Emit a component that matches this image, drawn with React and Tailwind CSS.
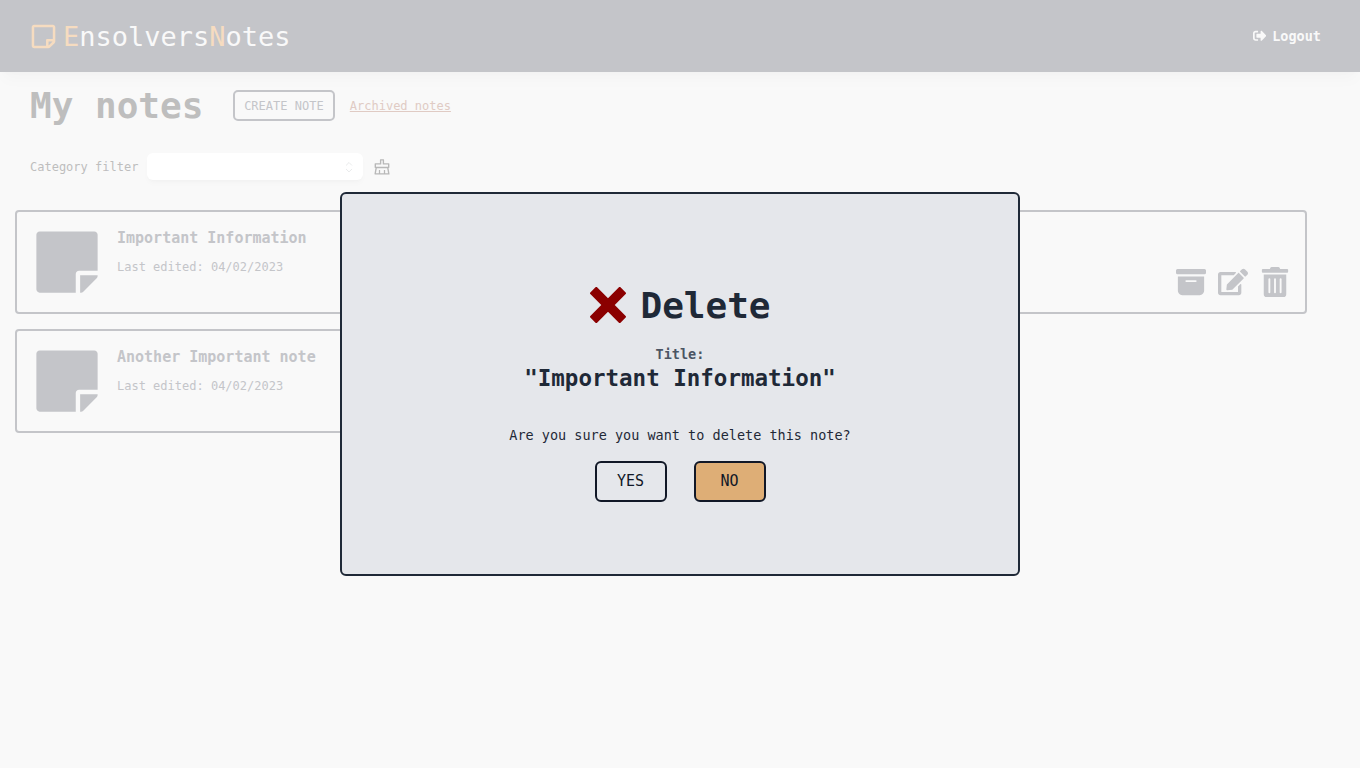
import { FaRegStickyNote, FaStickyNote, FaSignOutAlt, FaEdit, FaTrashAlt } from "react-icons/fa";
import { BsFillArchiveFill } from "react-icons/bs";
import { ImCross } from "react-icons/im";
import { AiOutlineClear } from "react-icons/ai";

const notes = [
  { id: 1, title: "Important Information", edited: "04/02/2023" },
  { id: 2 },
  { id: 3, title: "Another Important note", edited: "04/02/2023" },
];

function Header() {
  return (
    <header className="flex h-[72px] items-center justify-between bg-[#c4c5c9] pl-[30px] pr-[39px] shadow-[0_10px_15px_-3px_rgba(0,0,0,0.025),0_4px_6px_-4px_rgba(0,0,0,0.025)]">
      <div className="flex items-center gap-[6px] text-[27px] leading-[40px] text-[#f9f9f9]">
        <FaRegStickyNote className="text-[#f6dcc0]" />
        <span className="pt-[2px]">
          <span className="text-[#f6dcc0]">E</span>nsolvers<span className="text-[#f6dcc0]">N</span>otes
        </span>
      </div>
      <button className="flex items-center gap-[6px] text-[13.5px] font-bold leading-5 text-[#f9f9f9]">
        <FaSignOutAlt />
        Logout
      </button>
    </header>
  );
}

function NoteCard({ note }) {
  return (
    <article className="flex h-[104px] gap-[15px] rounded-[4px] border-2 border-[#c4c5c9] p-[15px] text-[#c4c5c9]">
      <FaStickyNote className="size-[70px] shrink-0" />
      <div className="grow">
        {note.title && (
          <>
            <h2 className="text-[15px] font-bold leading-[22px]">{note.title}</h2>
            <p className="mt-[9px] text-[12px] leading-[18px]">Last edited: {note.edited}</p>
          </>
        )}
      </div>
      <div className="flex items-end gap-3 text-[30px]">
        <BsFillArchiveFill />
        <FaEdit />
        <FaTrashAlt />
      </div>
    </article>
  );
}

function DeleteDialog() {
  return (
    <div className="fixed inset-0 flex items-center justify-center">
      <section
        role="dialog"
        className="flex h-1/2 w-1/2 flex-col items-center justify-center rounded-[6px] border-2 border-[#1f2937] bg-[#e5e7eb] pt-[18px] text-[#1f2937]"
      >
        <h2 className="flex h-[40px] items-center text-[36px] font-bold leading-[40px]">
          <ImCross className="ml-px mr-[14px] text-[#8b0000]" />
          <span className="pt-[2px]">Delete</span>
        </h2>
        <p className="mt-[19px] text-[13.5px] font-bold leading-5 text-[#4b5563]">Title:</p>
        <p className="text-[22.5px] font-bold leading-[28px]">"Important Information"</p>
        <p className="mt-[33px] text-[13.5px] leading-5">Are you sure you want to delete this note?</p>
        <div className="mt-4 flex gap-[27px] text-[15px] text-[#111827]">
          <button className="h-[41px] w-[72px] rounded-[6px] border-2 border-[#111827]">YES</button>
          <button className="h-[41px] w-[72px] rounded-[6px] border-2 border-[#111827] bg-[#deae76]">NO</button>
        </div>
      </section>
    </div>
  );
}

export default function App() {
  return (
    <div className="min-h-screen bg-[#f9f9f9] font-['DejaVu_Sans_Mono',monospace]">
      <Header />
      <main>
        <div className="flex h-[68px] items-center pl-[30px] text-[12px]">
          <h1 className="text-[36px] font-bold leading-[40px] text-[#bebebe]">My notes</h1>
          <button className="mb-px ml-[30px] h-[31px] w-[102px] rounded-[5px] border-2 border-[#c4c5c9] pr-px pt-px text-[#c4c5c9]">
            CREATE NOTE
          </button>
          <a className="ml-[14.4px] text-[#e0cbc4] underline" href="#archived">
            Archived notes
          </a>
        </div>
        <div className="mt-[13px] flex h-[27px] items-center pl-[30px] text-[12px] text-[#bebebe]">
          <span>Category filter</span>
          <button
            aria-label="Category"
            className="ml-[9px] flex h-[27px] w-[216px] items-center justify-end rounded-[6px] bg-white pr-[5px] shadow-[0_4px_6px_-1px_rgba(0,0,0,0.025),0_2px_4px_-2px_rgba(0,0,0,0.025)]"
          >
            <svg viewBox="0 0 20 20" className="size-[18px]" fill="none" stroke="#e7e8e9" strokeWidth="1" strokeLinecap="round" strokeLinejoin="round">
              <path d="M7 8l3-3 3 3m0 4.5l-3 3-3-3" />
            </svg>
          </button>
          <AiOutlineClear className="ml-[9px] size-[20px] text-[#b8b8b8]" />
        </div>
        <div className="mt-[30px] grid w-[1307px] grid-cols-2 gap-x-[15px] gap-y-[15px] pl-[15px]">
          {notes.map((note) => (
            <NoteCard key={note.id} note={note} />
          ))}
        </div>
      </main>
      <DeleteDialog />
    </div>
  );
}
